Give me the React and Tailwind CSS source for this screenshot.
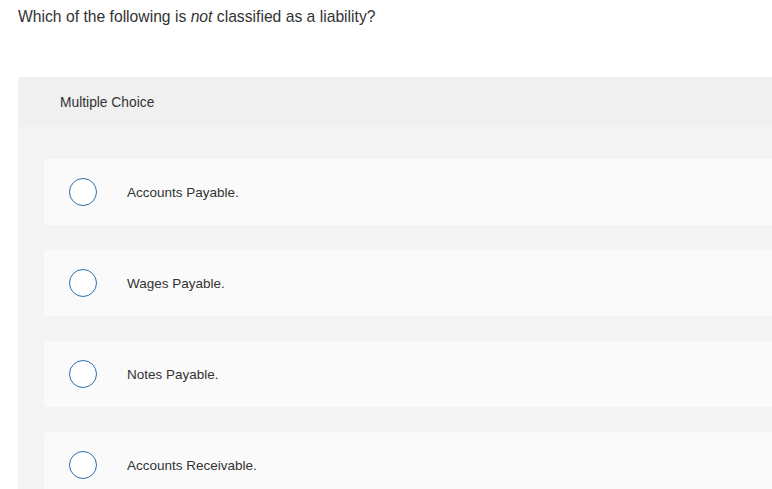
import React from "react";

const options = [
  "Accounts Payable.",
  "Wages Payable.",
  "Notes Payable.",
  "Accounts Receivable.",
];

const App = () => {
  return (
    <div
      className="min-h-screen bg-white text-[#333] overflow-hidden"
      style={{ fontFamily: '"Liberation Sans", Arial, sans-serif' }}
    >
      {/* Pregunta */}
      <div className="pl-[18px] pt-[6px] h-[77px] text-[15.7px] leading-[21px]">
        Which of the following is <em>not</em> classified as a liability?
      </div>

      <div className="ml-[18px] bg-[#f4f4f4] rounded-tl-[3px]">
        {/* Cabecera */}
        <div className="h-[50px] bg-[#f0f0f0] pl-[42px] pt-[2px] flex items-center text-[13.8px] rounded-tl-[3px]">
          Multiple Choice
        </div>

        {/* Opciones */}
        <div className="pl-[26px] pt-[32px] pb-[24px] flex flex-col gap-[25px]">
          {options.map((opt) => (
            <div
              key={opt}
              className="h-[66px] bg-[#fafafa] rounded-l-[3px] flex items-center pl-[25px]"
            >
              <span className="w-[28px] h-[28px] rounded-full border-[1.5px] border-[#2a6ead] bg-white shrink-0" />
              <span className="ml-[30px] pt-[2px] text-[13.5px]">{opt}</span>
            </div>
          ))}
        </div>
      </div>
    </div>
  );
};

export default App;
